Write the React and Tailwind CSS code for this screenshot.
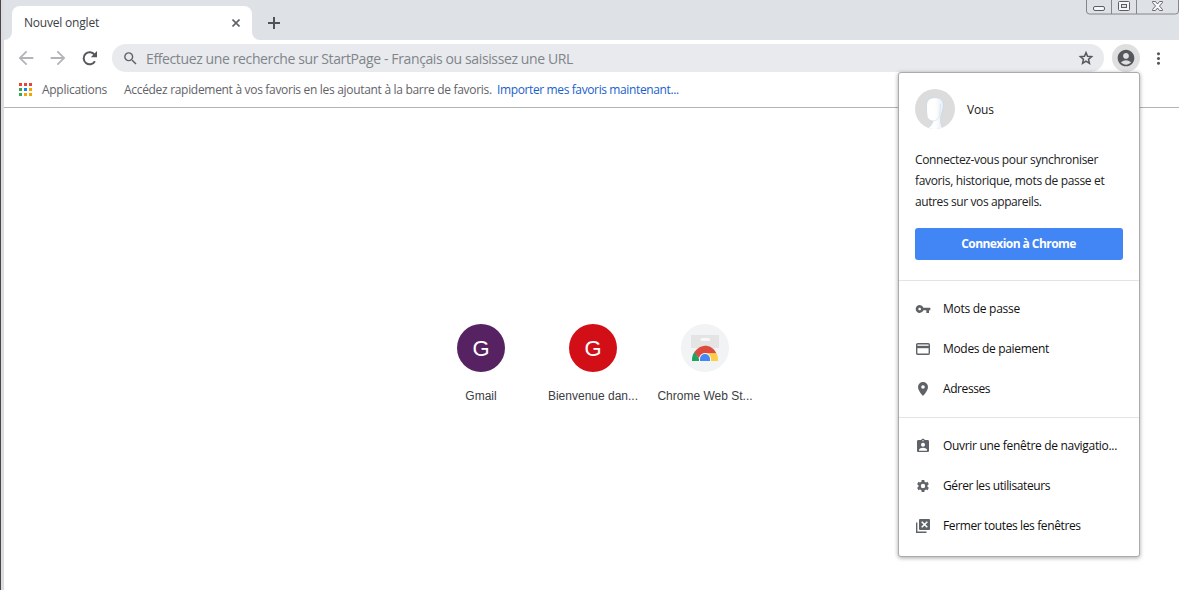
import { MdVpnKey, MdAssignmentInd, MdAccountCircle, MdMoreVert, MdSearch, MdArrowBack, MdArrowForward } from "react-icons/md";

const APP_COLORS = ["#ea4335", "#ea4335", "#ea4335", "#34a853", "#1a80f0", "#f4a400", "#34a853", "#f4a400", "#f4a400"];

function CloseAllIcon() {
  return (
    <svg width="16" height="16" viewBox="0 0 16 16" fill="none">
      <path d="M1.700 4.500v9.800h9.800" stroke="currentColor" strokeWidth="1.400" />
      <rect x="4" y="1" width="11" height="11" rx="1" fill="currentColor" />
      <path d="M6.700 3.700l5.600 5.600M12.300 3.700l-5.600 5.600" stroke="#fff" strokeWidth="1.600" />
    </svg>
  );
}

function CardIcon() {
  return (
    <svg width="16" height="16" viewBox="0 0 16 16" fill="none">
      <rect x="1.700" y="2.700" width="12.600" height="10.600" rx="1" stroke="currentColor" strokeWidth="1.400" />
      <path d="M1 6h14" stroke="currentColor" strokeWidth="2.400" />
    </svg>
  );
}

function PinIcon() {
  return (
    <svg width="16" height="16" viewBox="0 0 16 16" fill="currentColor">
      <path fillRule="evenodd" d="M8 1a5 5 0 0 0-5 5c0 3.700 5 9 5 9s5-5.300 5-9a5 5 0 0 0-5-5zm0 3.200a1.800 1.800 0 1 1 0 3.600 1.800 1.800 0 0 1 0-3.600z" />
    </svg>
  );
}

function GearIcon() {
  return (
    <svg width="16" height="16" viewBox="0 0 16 16" fill="none">
      <circle cx="8" cy="8" r="3.400" stroke="currentColor" strokeWidth="2.400" />
      <path d="M8 2v2M8 12v2M2.800 5l1.700 1M11.500 10l1.700 1M2.800 11l1.700-1M11.500 6l1.700-1" stroke="currentColor" strokeWidth="2.800" />
    </svg>
  );
}

function StarIcon() {
  return (
    <svg width="16" height="16" viewBox="0 0 16 16" fill="none">
      <path d="M8 2.600l1.550 3.750 4.050.35-3.070 2.660.92 3.960L8 11.200l-3.450 2.120.92-3.960L2.400 6.700l4.050-.35z" stroke="currentColor" strokeWidth="1.500" />
    </svg>
  );
}

function ReloadIcon() {
  return (
    <svg width="16" height="16" viewBox="0 0 16 16" fill="none">
      <path d="M12.900 11.200a6 6 0 1 1-.2-6.200" stroke="currentColor" strokeWidth="2" />
      <path d="M15 1v6.200H8.800z" fill="currentColor" />
    </svg>
  );
}

function WindowControls() {
  return (
    <svg width="93" height="15" viewBox="0 0 93 15" fill="none" className="shrink-0">
      <path d="M.5 0v11q0 3 3 3h86q3 0 3-3V0M25.500 0v14M50.500 0v14" stroke="#84868b" />
      <rect x="7.500" y="6.500" width="11" height="4" rx="1.500" fill="#f5f6f7" stroke="#5b5d62" />
      <rect x="32.500" y="1.500" width="11" height="9" rx="1" fill="#f5f6f7" stroke="#5b5d62" />
      <rect x="35.500" y="4.500" width="5" height="3" fill="#dee1e6" stroke="#5b5d62" />
      <path d="M66.500 1.500h3l2 2.500 2-2.500h3v1l-3 3.500 3 3.500v1h-3l-2-2.500-2 2.500h-3v-1l3-3.500-3-3.500z" fill="#f5f6f7" stroke="#5b5d62" strokeWidth=".9" />
    </svg>
  );
}

function Avatar() {
  return (
    <svg width="40" height="40" viewBox="0 0 40 40" className="shrink-0">
      <defs>
        <clipPath id="avatar-disc"><circle cx="20" cy="20" r="20" /></clipPath>
        <linearGradient id="avatar-hair" x1="0" x2="1" y1="0" y2="0">
          <stop offset=".5" stopColor="#fff" />
          <stop offset="1" stopColor="#e6eef5" />
        </linearGradient>
      </defs>
      <g clipPath="url(#avatar-disc)">
        <rect width="40" height="40" fill="#dcdcdc" />
        <path d="M11.500 17c0-6 3-8.300 8.500-8.300 6 0 8.700 2.800 8.500 8-.1 4.500-2.700 8-2.900 12.500-.1 4 .4 7 1.900 9.300L20 41l-7.500-2c2.500-1 4.700-3.500 5.500-7-3.500-.2-6-2.500-6-5.500-.4-3-.5-6-.5-9.500z" fill="url(#avatar-hair)" />
        <path d="M12.500 39c2.500-1 4.700-3.500 5.500-7-3.500-.2-6-2.500-6-5.500-.4-3-.5-6-.5-9.500 0-6 3-8.300 8.500-8.300 6 0 8.700 2.800 8.500 8-.1 4.500-2.700 8-2.900 12.500-.1 4 .4 7 1.900 9.300" fill="none" stroke="#c9d8e4" strokeWidth=".8" />
        <path d="M18 32c3 0 5.500-2 6.300-5 .8-4 1.200-8 1-12" fill="none" stroke="#d7e3ec" strokeWidth=".8" />
      </g>
    </svg>
  );
}

function StoreIcon() {
  return (
    <svg width="30" height="28" viewBox="0 0 30 28">
      <path d="M1 1h28v13H1z" fill="#e4e4e4" />
      <rect x="10.500" y="4" width="9.500" height="3" rx="1.500" fill="#f8f8f8" />
      <path d="M2 27a13 13 0 0 1 3-9.500l5 9.500z" fill="#1da462" />
      <path d="M4.500 18C7.500 14 11.500 11.800 15 11.800c5 0 9 2.500 11.500 7.700H15c-3 0-5 2-6 5z" fill="#dd4b3e" />
      <path d="M15 19.300h11.500c1 2 1.500 4.700 1.500 7.700h-8z" fill="#ffcd46" />
      <path d="M9 27v-2a6 6 0 0 1 12 0v2z" fill="#f4f6f8" />
      <path d="M10 27v-2a5 5 0 0 1 10 0v2z" fill="#4688f1" />
    </svg>
  );
}

function Shortcut({ label, color, children }) {
  return (
    <div className="flex w-28 flex-col items-center">
      <div className={`flex size-12 items-center justify-center rounded-full text-[22px] text-white ${color}`}>{children}</div>
      <div className="mt-4 h-4 whitespace-nowrap text-[12px] leading-4 text-[#3c4043]">{label}</div>
    </div>
  );
}

function MenuItem({ icon, label, tracking }) {
  return (
    <div className="flex h-10 items-center gap-3 px-4">
      <span className="flex size-4 items-center justify-center text-[#5f6368]">{icon}</span>
      <span className={`whitespace-nowrap text-[12px] leading-4 text-[#101010] ${tracking}`}>{label}</span>
    </div>
  );
}

function ProfileMenu() {
  return (
    <div className="absolute top-[72px] left-[898px] h-[485px] w-[242px] rounded-[3px] border border-[#aaabad] bg-white shadow-[0_1px_4px_rgba(0,0,0,0.35)]">
      <div className="flex h-[208px] flex-col border-b border-[#e4e4e4] px-4 pt-4">
        <div className="flex items-center gap-3">
          <Avatar />
          <span className="pt-0.5 text-[12px] leading-4 tracking-[-0.2px] text-[#202020]">Vous</span>
        </div>
        <div className="mt-5 whitespace-nowrap text-[12px] leading-[21px] text-[#202124]">
          <div className="tracking-[-0.34px]">Connectez-vous pour synchroniser</div>
          <div className="tracking-[-0.34px]">favoris, historique, mots de passe et</div>
          <div className="tracking-[-0.4px]">autres sur vos appareils.</div>
        </div>
        <div className="mt-4 flex h-8 items-center justify-center rounded-[3px] bg-[#4285f4] pr-px text-[12px] font-bold tracking-[-0.56px] text-white">Connexion à Chrome</div>
      </div>
      <div className="border-b border-[#e4e4e4] py-2">
        <MenuItem icon={<MdVpnKey size={16} />} label="Mots de passe" tracking="tracking-[-0.28px]" />
        <MenuItem icon={<CardIcon />} label="Modes de paiement" tracking="tracking-[-0.32px]" />
        <MenuItem icon={<PinIcon />} label="Adresses" tracking="tracking-[-0.42px]" />
      </div>
      <div className="py-2">
        <MenuItem icon={<MdAssignmentInd size={16} />} label="Ouvrir une fenêtre de navigatio..." tracking="tracking-[-0.31px]" />
        <MenuItem icon={<GearIcon />} label="Gérer les utilisateurs" tracking="tracking-[-0.4px]" />
        <MenuItem icon={<CloseAllIcon />} label="Fermer toutes les fenêtres" tracking="tracking-[-0.38px]" />
      </div>
    </div>
  );
}

export default function App() {
  return (
    <div className="relative flex h-[590px] w-[1179px] overflow-hidden bg-white font-['Open_Sans','Noto_Sans',sans-serif]">
      <div className="w-1 shrink-0 border-l border-[#4a4649] bg-[#dcdce1]" />
      <div className="flex min-w-0 flex-1 flex-col">
        <div className="flex h-10 shrink-0 items-start justify-between bg-[#dee1e6]">
          <div className="flex pt-1.5">
            <div className="h-[34px] w-2 bg-white">
              <div className="size-full rounded-br-lg bg-[#dee1e6]" />
            </div>
            <div className="flex h-[34px] w-60 items-center justify-between rounded-t-lg bg-white pr-3 pl-3">
              <span className="text-[12px] tracking-[-0.2px] text-[#3c4043]">Nouvel onglet</span>
              <svg width="8" height="8" viewBox="0 0 8 8" className="text-[#5f6368]">
                <path d="M.5.5l7 7M7.500.5l-7 7" stroke="currentColor" strokeWidth="1.600" />
              </svg>
            </div>
            <div className="h-[34px] w-2 bg-white">
              <div className="size-full rounded-bl-lg bg-[#dee1e6]" />
            </div>
            <div className="flex h-[34px] items-center pl-2">
              <svg width="12" height="12" viewBox="0 0 12 12" className="text-[#4f5257]">
                <path d="M0 6h12M6 0v12" stroke="currentColor" strokeWidth="2" />
              </svg>
            </div>
          </div>
          <WindowControls />
        </div>

        <div className="flex h-9 shrink-0 items-center">
          <div className="flex w-[108px] items-center pl-[11px]">
            <MdArrowBack size={22} className="text-[#b2b4b7]" />
            <MdArrowForward size={22} className="ml-[10px] text-[#b2b4b7]" />
            <span className="ml-[13px] text-[#54585d]"><ReloadIcon /></span>
          </div>
          <div className="flex h-7 w-[992px] items-center rounded-full bg-[#e9eaee] pr-[10px] pl-[10px]">
            <MdSearch size={17} className="text-[#5f6368]" />
            <span className="ml-[7px] flex-1 whitespace-nowrap text-[14px] tracking-[-0.38px] text-[#80858a]">Effectuez une recherche sur StartPage - Français ou saisissez une URL</span>
            <span className="text-[#54585d]"><StarIcon /></span>
          </div>
          <div className="ml-2 flex size-7 items-center justify-center rounded-full bg-[#dfdfdf]">
            <MdAccountCircle size={20} className="text-[#54585d]" />
          </div>
          <MdMoreVert size={19} className="ml-[9px] text-[#54585d]" />
        </div>

        <div className="flex h-8 shrink-0 items-center border-b border-[#b2b3b5] pb-1 pl-[15px] text-[12px] whitespace-nowrap text-[#5f6368]">
          <div className="grid grid-cols-3 gap-[2px]">
            {APP_COLORS.map((color, i) => (
              <span key={i} className="size-[3px]" style={{ backgroundColor: color }} />
            ))}
          </div>
          <span className="ml-[10px] w-[82px] tracking-[-0.28px]">Applications</span>
          <span className="w-[373px] tracking-[-0.31px]">Accédez rapidement à vos favoris en les ajoutant à la barre de favoris.</span>
          <span className="tracking-[-0.38px] text-[#1a5fcc]">Importer mes favoris maintenant...</span>
        </div>

        <div className="flex pt-[216px] pl-[421px] font-['Liberation_Sans',Arial,sans-serif]">
          <Shortcut label="Gmail" color="bg-[#572261]">G</Shortcut>
          <Shortcut label="Bienvenue dan..." color="bg-[#d20f17]">G</Shortcut>
          <Shortcut label="Chrome Web St..." color="bg-[#f1f3f4]"><StoreIcon /></Shortcut>
        </div>
      </div>
      <ProfileMenu />
    </div>
  );
}
